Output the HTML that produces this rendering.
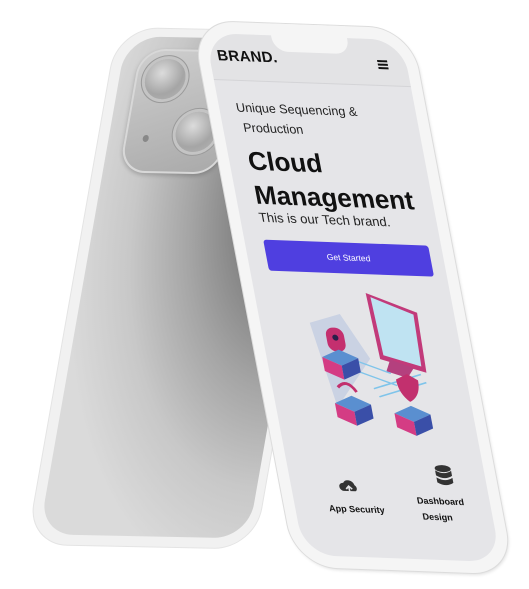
<!DOCTYPE html>
<html><head><meta charset="utf-8"><style>
html,body{margin:0;padding:0;background:#fff;width:529px;height:589px;overflow:hidden;position:relative;font-family:"Liberation Sans",sans-serif}
.back{position:absolute;left:0;top:0;width:227px;height:516px;transform-origin:0 0;transform:matrix(1,0.02,-0.176,1,118,28)}
.back .rim{position:absolute;left:0;top:0;right:0;bottom:0;border-radius:40px;background:#f1f1f1;box-shadow:0 0 0 1px #e4e4e4}
.back .body{position:absolute;left:10px;top:8px;right:8px;bottom:10px;border-radius:34px;background:radial-gradient(ellipse 110% 80% at 100% 30%,#5e5e5e 0%,#7c7c7c 25%,#a5a5a5 50%,#c8c8c8 75%,#dadada 100%)}
.bump{position:absolute;left:16px;top:12px;width:100px;height:124px;border-radius:26px;background:linear-gradient(160deg,#cfcfcf,#a9a9a9);box-shadow:0 0 0 2px #d8d8d8 inset,0 2px 4px rgba(0,0,0,.2)}
.lens{position:absolute;width:40px;height:40px;border-radius:50%;background:radial-gradient(circle at 40% 35%,#dcdcdc,#a5a5a5 60%,#b5b5b5);box-shadow:0 0 0 3px #c4c4c4,0 0 0 4px #9a9a9a}
.front{position:absolute;left:0;top:0;width:197px;height:522px;transform-origin:0 0;transform:matrix(1,0.036,0.19,1,205,33)}
.frame{position:absolute;left:-11px;top:-12px;width:219px;height:546px;border-radius:42px;background:#f5f5f5;box-shadow:0 0 0 1px #dcdcdc,1px 2px 3px rgba(0,0,0,.12)}
.screen{position:absolute;left:0;top:0;width:197px;height:522px;border-radius:32px;background:#e5e5e8;overflow:hidden}
.hdr{position:absolute;left:0;top:0;width:197px;height:46px;background:#e3e3e5;border-bottom:1px solid #d4d4d7}
.notch{position:absolute;left:66px;top:-12px;width:76px;height:28px;border-radius:0 0 14px 14px;background:#f5f5f5}
.t{position:absolute;white-space:nowrap;color:#111}
</style></head><body>
<div class="back">
  <div class="rim"></div>
  <div class="body">
    <div class="bump">
      <div class="lens" style="left:10px;top:10px"></div>
      <div class="lens" style="left:50px;top:62px"></div>
      <div style="position:absolute;left:18px;top:86px;width:6px;height:7px;border-radius:50%;background:#888"></div>
    </div>
  </div>
</div>
<div class="front">
  <div class="frame"></div>
  <div class="screen">
    <div class="hdr"></div>
    <div class="t" style="left:8px;top:14px;font-size:15px;font-weight:bold;letter-spacing:.3px">BRAND.</div>
    <div style="position:absolute;left:168px;top:21px;width:10px;height:2px;background:#111;box-shadow:0 3.5px 0 #111,0 7px 0 #111"></div>
    <div class="t" style="left:17px;top:64px;font-size:12.5px;line-height:20px;color:#222">Unique Sequencing &amp;<br>&nbsp;Production</div>
    <div class="t" style="left:19px;top:110px;font-size:26px;font-weight:bold;line-height:34px">Cloud<br>Management</div>
    <div class="t" style="left:19px;top:176px;font-size:13px;color:#222">This is our Tech brand.</div>
    <div style="position:absolute;left:19px;top:206px;width:165px;height:31px;border-radius:3px;background:#4f3fe0;color:#fff;font-size:8.5px;text-align:center;line-height:31px">Get Started</div>
    <svg style="position:absolute;left:42px;top:252px" width="130" height="160" viewBox="0 0 130 160">
      <polygon points="8,36 40,26 62,70 20,120" fill="#b8c4e0" opacity=".6"/>
      <polygon points="70,4 118,22 116,82 72,70" fill="#c23a7a"/>
      <polygon points="74,8 114,24 112,76 76,66" fill="#bfe3f2"/>
      <polygon points="82,70 104,78 96,88 76,82" fill="#b4407e"/>
      <path d="M40 70 L80 84 M44 82 L84 96 M60 100 L110 84 M64 108 L114 92" stroke="#7fc4ea" stroke-width="1.5" fill="none"/>
      <rect x="22" y="40" width="18" height="24" rx="8" fill="#c42f6f"/>
      <circle cx="31" cy="50" r="3" fill="#2a1f4a"/>
      <polygon points="14,70 32,62 50,70 32,78" fill="#5a8fd0"/><polygon points="14,70 32,78 32,92 14,84" fill="#d43c84"/><polygon points="32,78 50,70 50,84 32,92" fill="#3a4fa8"/>
      <path d="M24 100 q10 -10 18 4" stroke="#c2306e" stroke-width="3" fill="none"/>
      <polygon points="18,116 36,108 54,116 36,124" fill="#5a8fd0"/><polygon points="18,116 36,124 36,138 18,130" fill="#d43c84"/><polygon points="36,124 54,116 54,130 36,138" fill="#3a4fa8"/>
      <path d="M84 90 l12 -6 l10 6 q0 16 -12 22 q-10 -8 -10 -22z" fill="#c2306e"/>
      <polygon points="76,124 94,116 112,124 94,132" fill="#5a8fd0"/><polygon points="76,124 94,132 94,146 76,138" fill="#d43c84"/><polygon points="94,132 112,124 112,138 94,146" fill="#3a4fa8"/>
    </svg>
    <svg style="position:absolute;left:47px;top:441px" width="22" height="22" viewBox="0 0 22 22">
      <path d="M5 15 a4 4 0 0 1 1 -8 a6 6 0 0 1 11 2 a3.5 3.5 0 0 1 0 6z" fill="#333"/>
      <path d="M11 20 V10 M8 13 l3 -3 l3 3" stroke="#e5e5e8" stroke-width="1.6" fill="none"/>
    </svg>
    <div class="t" style="left:34px;top:469px;font-size:9px;font-weight:bold">App Security</div>
    <svg style="position:absolute;left:146px;top:426px" width="20" height="24" viewBox="0 0 20 24">
      <ellipse cx="10" cy="4" rx="8" ry="3.5" fill="#333"/>
      <path d="M2 6 q8 5 16 0 v5 q-8 5 -16 0z M2 13 q8 5 16 0 v5 q-8 5 -16 0z" fill="#333"/>
    </svg>
    <div class="t" style="left:124px;top:455px;font-size:9px;font-weight:bold;line-height:16px">Dashboard<br>&nbsp;Design</div>
  </div>
  <div class="notch"></div>
</div>
</body></html>
